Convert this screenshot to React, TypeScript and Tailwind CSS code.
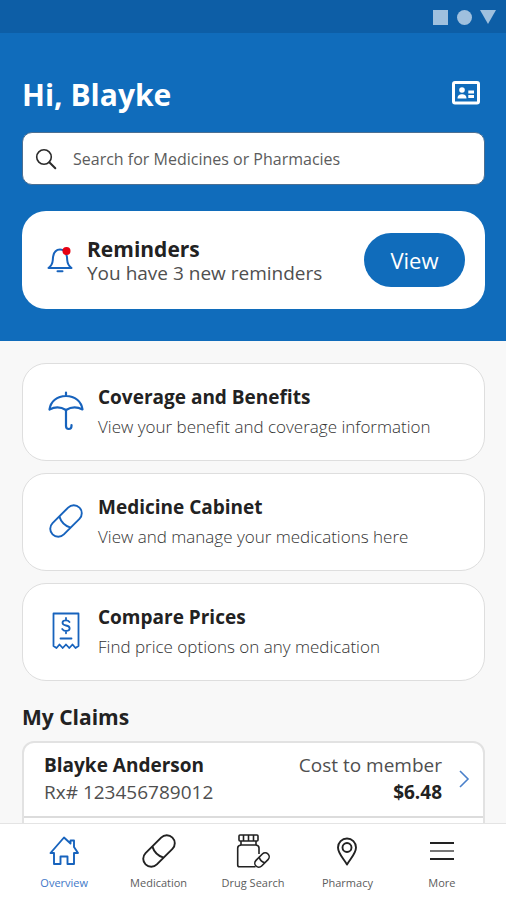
import type { ReactNode } from "react";

function StatusBar() {
  return (
    <div className="flex h-[33px] shrink-0 items-center justify-end bg-[#0d5ea6] pr-2 text-[#9fc0de]">
      <svg width="66" height="16" viewBox="0 0 66 16" fill="currentColor" aria-hidden="true">
        <path d="M1 1h15v15H1z" />
        <circle cx="32.500" cy="8.500" r="7.500" />
        <path d="M48 1h16l-8 14z" />
      </svg>
    </div>
  );
}

function IdCardIcon() {
  return (
    <svg width="28" height="24" viewBox="0 0 28 24" fill="#fff" aria-hidden="true">
      <rect x="1.500" y="1.500" width="25" height="20.500" rx="1.500" fill="none" stroke="#fff" strokeWidth="3" />
      <circle cx="10" cy="9" r="2.800" />
      <path d="M5.500 17.500c0-3.200 2-4.300 4.500-4.300s4.500 1.100 4.500 4.300z" />
      <path d="M16.300 9.500H22V12.500h-5.700zM16.300 14H22v3h-5.700z" />
    </svg>
  );
}

function SearchIcon() {
  return (
    <svg width="22" height="22" viewBox="0 0 22 22" fill="none" stroke="#2b2b2b" strokeWidth="1.600" strokeLinecap="round" aria-hidden="true">
      <circle cx="9" cy="9" r="7.300" />
      <path d="M14.300 14.300l6 6" strokeWidth="2" />
    </svg>
  );
}

function BellIcon() {
  return (
    <svg width="26" height="28" viewBox="0 0 26 28" fill="none" stroke="#1763bd" strokeWidth="2" strokeLinejoin="round" strokeLinecap="round" aria-hidden="true">
      <path d="M1.500 22h23c-2.800-2-4-4-4.300-8C20 7 18 3.500 13 3.500S6 7 5.800 14C5.500 18 4.300 20 1.500 22z" />
      <path d="M10.500 25.200h5" />
      <circle cx="19.500" cy="5" r="4" fill="#e60012" stroke="none" />
    </svg>
  );
}

function UmbrellaIcon() {
  return (
    <svg width="36" height="40" viewBox="0 0 36 40" fill="none" stroke="#1763bd" strokeWidth="2.200" strokeLinecap="round" strokeLinejoin="round" aria-hidden="true">
      <path d="M18 1.500V5M1.500 18.500C2.500 10.500 9 5 18 5s15.500 5.500 16.500 13.500c-5.500-2.800-11-2.800-16.500.5-5.500-3.300-11-3.300-16.500-.5z" />
      <path d="M18 19v16c0 4 5.500 4 5.500 0v-1" />
    </svg>
  );
}

function PillIcon() {
  return (
    <svg width="36" height="36" viewBox="0 0 36 36" fill="none" stroke="currentColor" strokeWidth="1.900" aria-hidden="true">
      <g transform="rotate(-45 18 18)">
        <rect x="-1" y="10" width="38" height="16" rx="8" />
        <path d="M16.500 10c-2.600 5-2.600 11 0 16" />
      </g>
    </svg>
  );
}

function ReceiptIcon() {
  return (
    <svg width="28" height="38" viewBox="0 0 28 38" fill="none" stroke="#1763bd" strokeWidth="1.800" strokeLinejoin="round" strokeLinecap="round" aria-hidden="true">
      <path d="M1.500 34V1.500h25V34l-3 2-3-3.500-3.200 3.500-3.300-3.500-3.300 3.500-3.200-3.500-3 3.500z" />
      <path d="M17.500 10c-.8-1.200-2-1.700-3.500-1.700-4.500 0-4.800 4.400 0 5.200 5 .8 4.700 5.500 0 5.500-1.800 0-3-.7-3.800-2M14 6v2.300M14 19v2.300M8.500 26.500h11" />
    </svg>
  );
}

function HomeIcon() {
  return (
    <svg width="30" height="30" viewBox="0 0 30 30" fill="none" stroke="currentColor" strokeWidth="1.900" strokeLinejoin="round" aria-hidden="true">
      <path d="M5 17H1.500L15 1.500l6.500 6V4.500H25V11l4 6H25V28h-6.500v-7.500h-7V28H5z" />
    </svg>
  );
}

function BottleIcon() {
  return (
    <svg width="34" height="34" viewBox="0 0 34 34" fill="none" stroke="currentColor" strokeWidth="1.600" strokeLinejoin="round" aria-hidden="true">
      <rect x="3" y="1" width="19" height="6" rx="1" />
      <path d="M7.500 1v6M12.500 1v6M17.500 1v6M5 7v4h15V7" />
      <path d="M20 11c2 .3 3 1.500 3 3v6M5 11c-2.500.3-3.300 1.500-3.300 3V31c0 1 .8 1.800 1.800 1.800h16" />
      <g transform="rotate(-45 26 26)">
        <rect x="17.500" y="22" width="17" height="8" rx="4" />
        <path d="M26 22c-1.300 2.500-1.300 5.500 0 8" />
      </g>
    </svg>
  );
}

function PinIcon() {
  return (
    <svg width="22" height="30" viewBox="0 0 22 30" fill="none" stroke="currentColor" strokeWidth="1.900" strokeLinejoin="round" aria-hidden="true">
      <path d="M11 28.500C7.500 22.500 2 17.500 2 11.500a9 9 0 0118 0C20 17.500 14.500 22.500 11 28.500z" />
      <circle cx="11" cy="11.500" r="4.500" />
    </svg>
  );
}

function MenuIcon() {
  return (
    <svg width="24" height="20" viewBox="0 0 24 20" fill="none" stroke="currentColor" strokeWidth="2" aria-hidden="true">
      <path d="M0 2h24M0 18h24" />
      <path d="M0 10h24" stroke="#777" />
    </svg>
  );
}

function ActionCard({ icon, title, text }: { icon: ReactNode; title: string; text: string }) {
  return (
    <a href="#" className="flex h-[98px] items-center rounded-3xl border border-[#dedede] bg-white pr-4 pb-0.5 pl-6">
      <span className="flex w-[38px] shrink-0 justify-center text-[#1763bd]">{icon}</span>
      <span className="ml-[13px] flex min-w-0 flex-col">
        <span className="text-[19px] leading-7 font-bold text-[#222]">{title}</span>
        <span className="mt-1 text-[17px] leading-6 font-light text-[#333]">{text}</span>
      </span>
    </a>
  );
}

function NavItem({ icon, label, active = false }: { icon: ReactNode; label: string; active?: boolean }) {
  return (
    <a href="#" className={`flex flex-1 flex-col items-center ${active ? "text-[#1763bd]" : "text-[#222]"}`}>
      <span className="flex h-[38px] items-center">{icon}</span>
      <span className={`mt-[5px] text-[11px] leading-4 whitespace-nowrap ${active ? "text-[#3f78c8]" : "text-[#5c5c5c]"}`}>{label}</span>
    </a>
  );
}

export default function App() {
  return (
    <div className="flex h-screen flex-col bg-[#f8f8f8] font-['Open_Sans',sans-serif]">
      <StatusBar />
      <main className="min-h-0 flex-1 overflow-y-auto [scrollbar-width:none]">
        <header className="bg-[#106cbb] pt-10 pr-[21px] pb-8 pl-[22px]">
          <div className="flex h-11 items-center justify-between">
            <h1 className="text-[30px] leading-10 font-bold text-white">Hi, Blayke</h1>
            <button type="button" aria-label="Member ID card" className="mr-[5px] mb-1">
              <IdCardIcon />
            </button>
          </div>
          <label className="mt-[15px] flex h-[53px] items-center rounded-[10px] border border-[#4c6f92] bg-white px-3">
            <SearchIcon />
            <input
              type="search"
              aria-label="Search for Medicines or Pharmacies"
              placeholder="Search for Medicines or Pharmacies"
              className="ml-4 min-w-0 flex-1 bg-transparent text-base text-[#333] outline-none placeholder:text-[#5c5c5c]"
            />
          </label>
          <section className="mt-[26px] flex h-[98px] items-center rounded-3xl bg-white pr-5 pl-[25px]">
            <BellIcon />
            <div className="ml-[14px] flex-1 pt-0.5">
              <h2 className="text-[21px] leading-6 font-bold text-[#222]">Reminders</h2>
              <p className="text-[19px] leading-6 text-[#4f4f4f]">You have 3 new reminders</p>
            </div>
            <button type="button" className="h-[54px] w-[101px] rounded-full bg-[#106cbb] text-[22px] text-white">
              View
            </button>
          </section>
        </header>
        <div className="flex flex-col gap-3 pt-[22px] pr-[21px] pl-[22px]">
          <ActionCard icon={<UmbrellaIcon />} title="Coverage and Benefits" text="View your benefit and coverage information" />
          <ActionCard icon={<PillIcon />} title="Medicine Cabinet" text="View and manage your medications here" />
          <ActionCard icon={<ReceiptIcon />} title="Compare Prices" text="Find price options on any medication" />
        </div>
        <section className="pt-[22px] pr-[21px] pl-[22px]">
          <h2 className="text-[21px] leading-7 font-bold text-[#222]">My Claims</h2>
          <div className="mt-[10px] rounded-t-xl border-2 border-[#e2e2e2] bg-white">
            <a href="#" className="flex h-[75px] items-center border-b-2 border-[#dcdcdc] pr-[13px] pb-0.5 pl-5">
              <span className="flex flex-1 flex-col text-[19px] leading-[27px] text-[#4f4f4f]">
                <span className="font-bold text-[#222]">Blayke Anderson</span>
                <span>Rx# 123456789012</span>
              </span>
              <span className="flex flex-col items-end text-[19px] leading-[27px] text-[#4f4f4f]">
                <span>Cost to member</span>
                <span className="font-bold text-[#222]">$6.48</span>
              </span>
              <svg className="ml-4" width="12" height="18" viewBox="0 0 12 18" fill="none" stroke="#4a80ca" strokeWidth="1.600" aria-hidden="true">
                <path d="M2 1l8 8-8 8" />
              </svg>
            </a>
            <div className="h-[75px]" />
          </div>
        </section>
      </main>
      <nav aria-label="Main" className="flex h-[77px] shrink-0 border-t border-[#e4e4e4] bg-white px-[17px] pt-2">
        <NavItem icon={<HomeIcon />} label="Overview" active />
        <NavItem icon={<PillIcon />} label="Medication" />
        <NavItem icon={<BottleIcon />} label="Drug Search" />
        <NavItem icon={<PinIcon />} label="Pharmacy" />
        <NavItem icon={<MenuIcon />} label="More" />
      </nav>
    </div>
  );
}
